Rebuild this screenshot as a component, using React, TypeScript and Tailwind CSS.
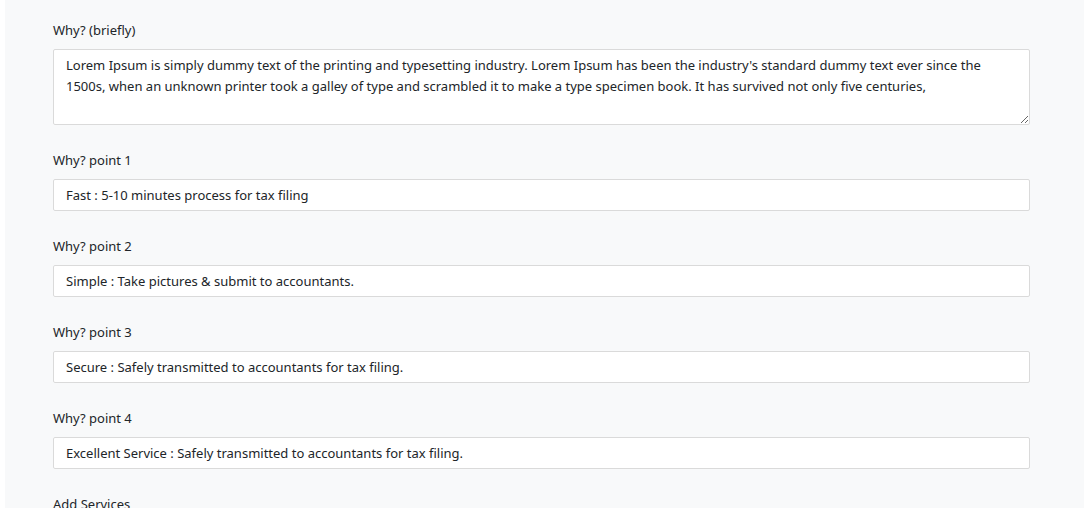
import React from "react";

const font = { fontFamily: '"Noto Sans", "Open Sans", sans-serif' };

function Field({ label, value }: { label: string; value: string }) {
  return (
    <div className="mb-[25px]">
      <label className="block mb-[8px] text-[13px] leading-[21px] text-[#212529]">{label}</label>
      <input
        type="text"
        defaultValue={value}
        className="block w-full h-[32px] px-[12px] text-[13px] leading-[21px] text-[#212529] bg-white border border-[#dadada] rounded-[2px] outline-none"
      />
    </div>
  );
}

export default function App() {
  return (
    <div className="min-h-[508px] bg-white pl-[5px]" style={font}>
      <div className="min-h-[508px] bg-[#f8f9fa] pt-[20px] pl-[48px] pr-[54px]">
        <div className="mb-[25px]">
          <label className="block mb-[8px] text-[13px] leading-[21px] text-[#212529]">Why? (briefly)</label>
          <textarea
            defaultValue="Lorem Ipsum is simply dummy text of the printing and typesetting industry. Lorem Ipsum has been the industry's standard dummy text ever since the 1500s, when an unknown printer took a galley of type and scrambled it to make a type specimen book. It has survived not only five centuries,"
            className="block w-full h-[76px] px-[12px] pt-[5px] text-[13px] leading-[21px] text-[#212529] bg-white border border-[#dadada] rounded-[2px] outline-none"
          />
        </div>
        <Field label="Why? point 1" value="Fast : 5-10 minutes process for tax filing" />
        <Field label="Why? point 2" value="Simple : Take pictures & submit to accountants." />
        <Field label="Why? point 3" value="Secure : Safely transmitted to accountants for tax filing." />
        <Field label="Why? point 4" value="Excellent Service : Safely transmitted to accountants for tax filing." />
        <label className="block text-[13px] leading-[21px] text-[#212529]">Add Services</label>
      </div>
    </div>
  );
}
